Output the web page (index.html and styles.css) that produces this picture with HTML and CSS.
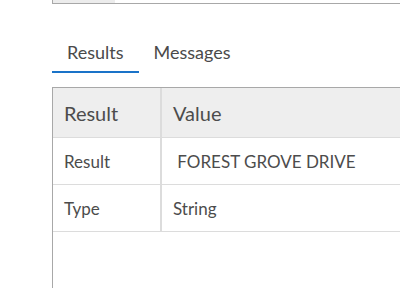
FILE: index.html
```html
<html>
<head>
<title>Results</title>
<link rel="stylesheet" href="styles.css">
</head>
<body>
<div id="panel">
  <div id="topbox"><div class="topbtn"></div></div>
  <div id="tabs">
    <div class="tab active">Results</div>
    <div class="tab">Messages</div>
  </div>
  <div id="tablewrap">
    <table id="results">
      <tr class="head"><th class="c1">Result</th><th>Value</th></tr>
      <tr><td class="c1">Result</td><td>&nbsp;FOREST GROVE DRIVE</td></tr>
      <tr><td class="c1">Type</td><td>String</td></tr>
    </table>
  </div>
</div>
</body>
</html>
```

FILE: styles.css
```css
html, body{
margin:0;
padding:0;
background:#ffffff;
}
body{
font-family:"Lato", "Open Sans", sans-serif;
color:#4c4c4c;
overflow:hidden;
}
#panel{
padding-left:52px;
}
#topbox{
height:3px;
border-left:1px solid #a8a8a8;
border-bottom:1px solid #a8a8a8;
display:flex;
}
.topbtn{
width:62px;
background:#ececec;
}
#tabs{
display:flex;
margin-top:36px;
}
.tab{
font-size:18px;
line-height:24px;
padding:0 15px 7px 15px;
border-bottom:2px solid transparent;
color:#4a4a4a;
}
.tab.active{
border-bottom-color:#1a73c8;
}
#tablewrap{
margin-top:14px;
border-top:1px solid #a8a8a8;
border-left:1px solid #a8a8a8;
height:200px;
width:347px;
}
#results{
border-collapse:collapse;
width:100%;
}
#results th, #results td{
text-align:left;
font-weight:normal;
padding:0 11px;
border-bottom:1px solid #dcdcdc;
white-space:nowrap;
}
#results th{
background:#eeeeee;
font-size:20px;
height:49px;
padding-top:1px;
}
#results td{
font-size:17px;
height:47px;
padding-top:2px;
}
#results .c1{
width:85px;
border-right:2px solid #dcdcdc;
}
```
